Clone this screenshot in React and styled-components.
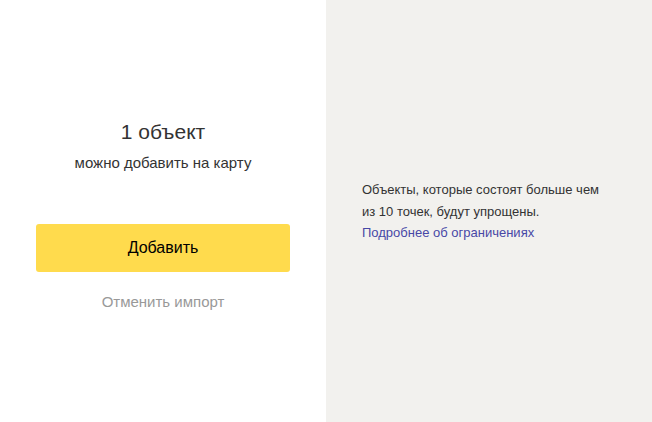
import React from "react";
import styled, { createGlobalStyle } from "styled-components";

const Global = createGlobalStyle`
  html, body { margin: 0; padding: 0; }
  body { font-family: "Liberation Sans", Arial, sans-serif; background: #fff; }
`;

const Layout = styled.div`
  display: grid;
  grid-template-columns: 326px 326px;
  width: 652px;
  height: 422px;
`;

const Main = styled.section`
  display: flex;
  flex-direction: column;
  align-items: stretch;
  padding: 120px 36px 0;
  background: #fff;
  color: #333;
  text-align: center;
`;

const Title = styled.div`
  font-size: 21px;
  line-height: 24px;
`;

const Subtitle = styled.div`
  margin-top: 10px;
  font-size: 15px;
  line-height: 18px;
`;

const AddButton = styled.button`
  margin-top: 52px;
  height: 48px;
  border: none;
  border-radius: 3px;
  background: #ffdb4d;
  color: #000;
  font-family: inherit;
  font-size: 16px;
  cursor: pointer;
`;

const CancelLink = styled.div`
  margin-top: 21px;
  font-size: 15px;
  line-height: 18px;
  color: #999;
`;

const Aside = styled.aside`
  display: flex;
  flex-direction: column;
  justify-content: center;
  padding: 0 36px;
  background: #f2f1ee;
  color: #333;
  font-size: 13px;
`;

const Note = styled.p`
  margin: 0;
  line-height: 22px;
`;

const More = styled.a`
  line-height: 20px;
  color: #4848a6;
  text-decoration: none;
`;

export default function App() {
  return (
    <>
      <Global />
      <Layout>
        <Main>
          <Title>1 объект</Title>
          <Subtitle>можно добавить на карту</Subtitle>
          <AddButton>Добавить</AddButton>
          <CancelLink>Отменить импорт</CancelLink>
        </Main>
        <Aside>
          <Note>
            Объекты, которые состоят больше чем
            <br />
            из 10 точек, будут упрощены.
          </Note>
          <More href="#">Подробнее об ограничениях</More>
        </Aside>
      </Layout>
    </>
  );
}
